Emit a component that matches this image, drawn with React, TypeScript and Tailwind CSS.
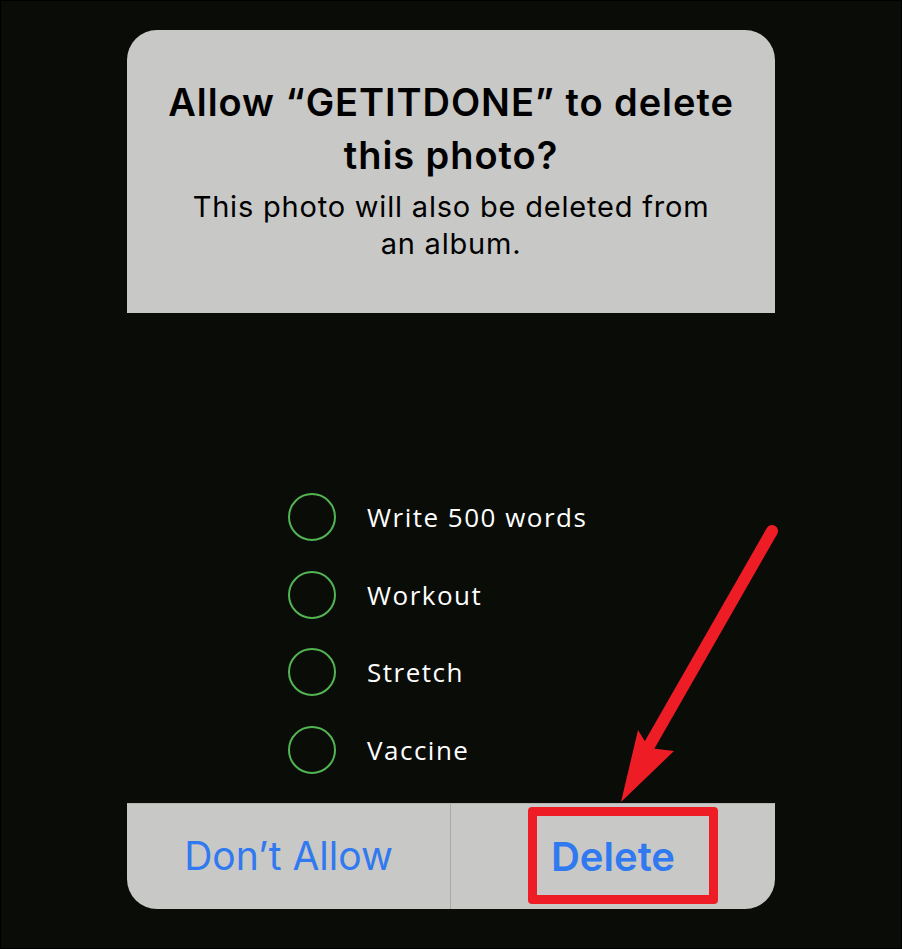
import React from "react";

const tasks = ["Write 500 words", "Workout", "Stretch", "Vaccine"];

export default function App() {
  return (
    <div className="relative w-[902px] h-[949px] bg-[#0a0c07] border border-black overflow-hidden" style={{ fontFamily: "Inter, 'Liberation Sans', sans-serif" }}>
      <div className="flex flex-col items-center pt-[29px]">
        <div className="w-[648px] h-[283px] bg-[#c8c8c6] rounded-t-[30px] flex flex-col items-center pt-[46px] text-black">
          <div className="text-[38px] leading-[53px] font-semibold text-center tracking-[0.95px] whitespace-nowrap">
            Allow “GETITDONE” to delete
            <br />
            this photo?
          </div>
          <div className="mt-[6px] text-[29px] leading-[37px] text-center tracking-[0.8px] whitespace-nowrap">
            This photo will also be deleted from
            <br />
            an album.
          </div>
        </div>
        <div className="w-[648px] h-[490px] flex flex-col pt-[180px] pl-[161px] gap-[29.5px]">
          {tasks.map((t) => (
            <div key={t} className="flex items-center h-[48px]">
              <div className="w-[48px] h-[48px] rounded-full border-2 border-[#52b552]" />
              <div className="ml-[31px] text-white text-[26px] leading-none tracking-[1.5px]" style={{ fontFamily: "'Open Sans', sans-serif" }}>
                {t}
              </div>
            </div>
          ))}
        </div>
        <div className="w-[648px] h-[106px] bg-[#c8c8c6] rounded-b-[30px] flex border-t border-[#b5b5b3]">
          <div className="w-[324px] flex items-center justify-center text-[#3079f0] text-[39px] border-r border-[#a9a9a7]">
            Don’t Allow
          </div>
          <div className="flex-1 flex items-center justify-center text-[#3079f0] text-[40px] font-semibold">
            Delete
          </div>
        </div>
      </div>
      <div className="absolute left-[527px] top-[806px] w-[190px] h-[97px] border-[9px] border-[#ee1c25] rounded-[4px]" />
      <svg className="absolute left-0 top-0" width="902" height="949" viewBox="0 0 902 949">
        <line x1="771" y1="530" x2="648" y2="745" stroke="#ee1c25" strokeWidth="12" strokeLinecap="round" />
        <polygon points="620,801 637,729 648,747 673,750" fill="#ee1c25" />
      </svg>
    </div>
  );
}
